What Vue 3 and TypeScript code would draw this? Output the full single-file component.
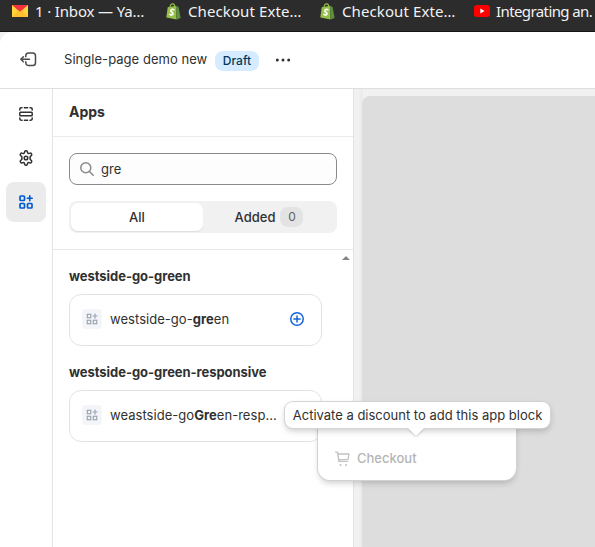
<script setup lang="ts">
interface Tab { title: string; icon: 'mail' | 'bag' | 'video'; kind: string }
interface AppGroup { name: string; before: string; match: string; after: string; addable: boolean }

const tabs: Tab[] = [
  { title: '1 · Inbox — Ya…', icon: 'mail', kind: 'tab-mail' },
  { title: 'Checkout Exte…', icon: 'bag', kind: 'tab-bag' },
  { title: 'Checkout Exte…', icon: 'bag', kind: 'tab-bag' },
  { title: 'Integrating an.', icon: 'video', kind: 'tab-video' },
]

const groups: AppGroup[] = [
  { name: 'westside-go-green', before: 'westside-go-', match: 'gre', after: 'en', addable: true },
  { name: 'westside-go-green-responsive', before: 'weastside-go', match: 'Gre', after: 'en-resp...', addable: false },
]
</script>

<template>
  <div class="screen">
    <div class="tabs">
      <div v-for="(tab, i) in tabs" :key="i" class="tab" :class="tab.kind">
        <svg v-if="tab.icon === 'mail'" class="tab-icon" width="16" height="12" viewBox="0 0 16 12">
          <rect width="16" height="12" fill="#ffd43b" />
          <path d="M0 0h16L8 7z" fill="#f5333f" />
          <path d="M0 12 6 5.3 8 7l2-1.700L16 12z" fill="#ffc02e" />
        </svg>
        <svg v-else-if="tab.icon === 'bag'" class="tab-icon" width="15" height="17" viewBox="0 0 15 17">
          <path d="M1.700 4.300 10 2.800l.6 13.700L.3 14.600z" fill="#95bf47" />
          <path d="m10 2.800 2.600 1.200L14.600 15l-4 1.500z" fill="#5e8e3e" />
          <path d="M3.800 4.500C4.200 2.300 5.600.8 7 .9c1.300.1 1.700 1.500 1.700 2.900" fill="none" stroke="#95bf47" stroke-width="1.100" />
          <path d="M7.900 6.700C6.300 5.900 4.600 6.500 4.800 7.900c.2 1.200 2.300 1.500 2.200 2.900-.1 1.400-1.700 1.500-3 .5" fill="none" stroke="#fff" stroke-width="1.700" />
        </svg>
        <svg v-else class="tab-icon" width="16" height="12" viewBox="0 0 16 12">
          <rect width="16" height="12" rx="3" fill="#f00" />
          <path d="M6.300 3.500v5l4.300-2.500z" fill="#fff" />
        </svg>
        <span class="tab-title">{{ tab.title }}</span>
      </div>
    </div>

    <div class="page">
      <header class="topbar">
        <svg class="exit" width="18" height="16" viewBox="0 0 18 16">
          <path d="M5.800 4.700V3.800c0-1.600 1.200-2.800 2.800-2.800h4.100c1.600 0 2.800 1.200 2.800 2.800v6.900c0 1.600-1.200 2.800-2.800 2.800H8.600c-1.600 0-2.800-1.200-2.800-2.800v-.9M9.500 7.250H.8M3.400 4.700.8 7.250l2.600 2.550" />
        </svg>
        <span class="doc-name">Single-page demo new</span>
        <span class="draft">Draft</span>
        <svg class="more" width="16" height="4" viewBox="0 0 16 4"><circle cx="2.300" cy="2" r="1.500" /><circle cx="8" cy="2" r="1.500" /><circle cx="13.700" cy="2" r="1.500" /></svg>
      </header>

      <div class="workspace">
        <nav class="rail">
          <button class="rail-item" aria-label="Sections">
            <svg width="14" height="14" viewBox="0 0 14 14">
              <path d="M.8 3V2.200C.8 1.400 1.400.8 2.200.8H3M5.400.8h3.200M11 .8h.8c.8 0 1.400.6 1.400 1.400V3M.8 11v.8c0 .8.6 1.400 1.400 1.400H3M5.400 13.200h3.200M11 13.200h.8c.8 0 1.400-.6 1.400-1.400V11" />
              <rect x=".8" y="5.200" width="12.400" height="3.600" rx=".8" />
            </svg>
          </button>
          <button class="rail-item" aria-label="Settings">
            <svg width="16" height="16" viewBox="0 0 16 16">
              <path d="M6.600 1.800C6.700 1.200 7.100.8 7.700.8h.6c.6 0 1 .4 1.100 1l.2 1.100c.1.400.7.800 1.200.6l1.100-.4c.5-.2 1.100 0 1.400.5l.3.500c.3.500.2 1.100-.3 1.500l-.8.7c-.4.300-.4.500-.4.700v2c0 .2 0 .4.400.7l.8.7c.5.400.6 1 .3 1.500l-.3.500c-.3.500-.9.700-1.400.5l-1.100-.4c-.5-.2-1.100.2-1.200.6l-.2 1.100c-.1.600-.5 1-1.100 1h-.6c-.6 0-1-.4-1.100-1l-.2-1.100c-.1-.4-.7-.8-1.200-.6l-1.100.4c-.5.2-1.100 0-1.400-.5l-.3-.5c-.3-.5-.2-1.100.3-1.500l.8-.7c.4-.3.4-.5.400-.7V7c0-.2 0-.4-.4-.7l-.8-.7c-.5-.4-.6-1-.3-1.500l.3-.5c.3-.5.9-.7 1.400-.5l1.100.4c.5.200 1.100-.2 1.200-.6z" />
              <circle cx="8" cy="8" r="1.800" />
            </svg>
          </button>
          <button class="rail-item active" aria-label="Apps">
            <svg width="14" height="14" viewBox="0 0 14 14"><rect x="1" y="1" width="4.500" height="4.500" rx=".8" /><rect x="1" y="8.500" width="4.500" height="4.500" rx=".8" /><rect x="8.500" y="8.500" width="4.500" height="4.500" rx=".8" /><path d="M10.750.9v4.700M8.400 3.250h4.700" /></svg>
          </button>
        </nav>

        <aside class="panel">
          <h2 class="panel-title">Apps</h2>
          <div class="filters">
            <div class="search">
              <svg width="14" height="14" viewBox="0 0 14 14"><circle cx="5.800" cy="5.800" r="5" /><path d="m9.500 9.500 3.700 3.700" /></svg>
              <span>gre</span>
            </div>
            <div class="segments">
              <div class="segment selected">All</div>
              <div class="segment">Added <span class="count">0</span></div>
            </div>
          </div>
          <div class="results">
            <span class="scroll-up"></span>
            <section v-for="group in groups" :key="group.name" class="group">
              <h3>{{ group.name }}</h3>
              <div class="card">
                <span class="app-icon">
                  <svg width="12" height="12" viewBox="0 0 14 14"><rect x="1.500" y="1.500" width="4" height="4" /><rect x="1.500" y="8.500" width="4" height="4" /><rect x="8.500" y="8.500" width="4" height="4" /><path d="M10.500 1v5M8 3.500h5" /></svg>
                </span>
                <span class="app-name">{{ group.before }}<b>{{ group.match }}</b>{{ group.after }}</span>
                <svg v-if="group.addable" class="add" width="14" height="14" viewBox="0 0 14 14"><circle cx="7" cy="7" r="6.250" /><path d="M7 3.900v6.200M3.900 7h6.200" /></svg>
              </div>
            </section>
          </div>
        </aside>

        <main class="stage"><div class="canvas"></div></main>
      </div>
    </div>

    <div class="popover">
      <svg width="15" height="16" viewBox="0 0 15 16">
        <path d="M.6 1.200h2l1.200 9.100h8.900M2.900 3h11l-.8 5.300-9.500.3" />
        <g class="wheels"><circle cx="5.500" cy="14" r="1" /><circle cx="11" cy="14" r="1" /></g>
      </svg>
      <span>Checkout</span>
    </div>
    <div class="tooltip">Activate a discount to add this app block</div>
  </div>
</template>

<style>
body { margin: 0; overflow: hidden; }
</style>

<style scoped>
* { box-sizing: border-box; }
.screen { position: relative; width: 595px; height: 547px; overflow: hidden; background: #f1f1f1; color: #303030; font-family: Inter, "Liberation Sans", sans-serif; font-size: 13px; line-height: 20px; }
.tabs { display: flex; height: 32px; background: #2c2c2c; border-bottom: 1px solid #151515; overflow: hidden; padding-left: 12px; }
.tab { display: flex; flex: none; align-items: center; height: 22px; width: 154px; color: #f2f2f2; font: 15px/22px "Noto Sans", sans-serif; white-space: nowrap; }
.tab-mail { gap: 7px; letter-spacing: -.15px; }
.tab-bag { gap: 7px; letter-spacing: .1px; }
.tab-video { gap: 6px; width: 121px; letter-spacing: -.6px; }
.tab-icon { flex: none; }
.page { height: 515px; background: #fff; border-top-left-radius: 12px; overflow: hidden; }
.topbar { display: flex; align-items: center; height: 57px; padding: 0 0 1px 20px; border-bottom: 1px solid #dedede; }
svg { flex: none; fill: none; stroke: #303030; stroke-width: 1.500; stroke-linecap: round; stroke-linejoin: round; }
.tab-icon { stroke: none; }
.exit { stroke: #4a4a4a; }
.doc-name { width: 151px; margin: -1px 0 0 26px; letter-spacing: .04px; white-space: nowrap; }
.draft { width: 44px; height: 20px; margin-top: 2px; border-radius: 8px; background: #d5ebff; color: #003a5a; font-size: 12px; font-weight: 500; line-height: 20px; text-align: center; }
.more { margin-left: 16px; fill: #303030; stroke: none; }
.workspace { display: flex; height: 458px; }
.rail { display: flex; flex-direction: column; align-items: center; gap: 4px; width: 53px; padding: 5px 1px 0 0; border-right: 1px solid #e3e3e3; }
.rail-item { display: flex; align-items: center; justify-content: center; width: 40px; height: 40px; padding: 0; border: 0; border-radius: 8px; background: none; }
.rail-item.active { background: #ebebeb; }
.rail-item.active svg { stroke: #005bd3; stroke-width: 1.700; }
.panel { width: 301px; border-right: 1px solid #e3e3e3; }
.panel-title { height: 48px; margin: 0; padding: 13px 16px; border-bottom: 1px solid #ebebeb; font-size: 14px; font-weight: 650; line-height: 20px; }
.filters { display: flex; flex-direction: column; gap: 16px; height: 113px; padding: 16px; border-bottom: 1px solid #e7e7e7; }
.search { display: flex; align-items: center; flex: none; gap: 7px; height: 32px; padding-left: 10px; border: 1px solid #8a8a8a; border-radius: 8px; background: #fdfdfd; }
.search svg { stroke: #8a8a8a; }
.segments { display: flex; flex: none; height: 32px; padding: 2px; border-radius: 8px; background: #f1f1f1; font-weight: 500; }
.segment { display: flex; flex: 1; align-items: center; justify-content: center; gap: 5px; border-radius: 7px; }
.selected { background: #fff; box-shadow: 0 1px 1px #ddd; }
.count { width: 23px; height: 20px; border-radius: 8px; background: #e3e3e3; color: #616161; text-align: center; font-size: 12px; font-weight: 400; }
.results { position: relative; padding: 16px 31px 0 16px; }
.scroll-up { position: absolute; right: 3px; top: 6px; border: 4px solid transparent; border-top: 0; border-bottom-color: #858585; }
.group { margin-bottom: 16px; }
.group h3 { margin: 0 0 8px; font-size: 13px; font-weight: 650; letter-spacing: -.05px; line-height: 20px; white-space: nowrap; }
.card { display: flex; align-items: center; height: 52px; padding: 0 17px 2px 12px; border: 1px solid #e3e3e3; border-radius: 12px; }
.app-icon { display: flex; align-items: center; justify-content: center; width: 20px; height: 20px; border-radius: 4px; background: #f3f5f8; }
.app-icon svg { stroke: #9ca6b4; stroke-width: 1.400; stroke-linejoin: miter; }
.app-name { margin-left: 8px; letter-spacing: .04px; white-space: nowrap; }
.app-name b { font-weight: 650; }
.add { margin-left: auto; stroke: #1467d8; }
.stage { flex: 1; padding: 7px 0 0 8px; background: linear-gradient(90deg, #f1f1f1 0 5px, #e9e9e9 8px, #f1f1f1 9px); }
.canvas { height: 100%; border-top-left-radius: 8px; background: #ddd; }
.popover { position: absolute; left: 318px; top: 410px; display: flex; align-items: flex-end; gap: 6px; width: 198px; height: 70px; padding: 0 18px 12px; border-radius: 12px; background: #fff; color: #b5b5b5; box-shadow: 0 0 0 1px #d2d2d2, 0 4px 6px -1px #0003; font-weight: 500; }
.popover svg { margin: 0 1px 1px -1px; stroke: #c2c2c2; stroke-width: 1.300; }
.popover .wheels { fill: #c2c2c2; stroke: none; }
.tooltip { position: absolute; left: 285px; top: 402px; width: 265px; height: 26px; border-radius: 8px; background: #fff; box-shadow: 0 0 0 1px #d4d4d4, 0 3px 6px #0003; line-height: 27px; text-align: center; white-space: nowrap; }
.tooltip::after { content: ""; position: absolute; left: 123px; top: 26px; border: 8px solid transparent; border-top: 8px solid #fff; border-bottom: 0; filter: drop-shadow(0 1px 1px #0003); }
</style>
